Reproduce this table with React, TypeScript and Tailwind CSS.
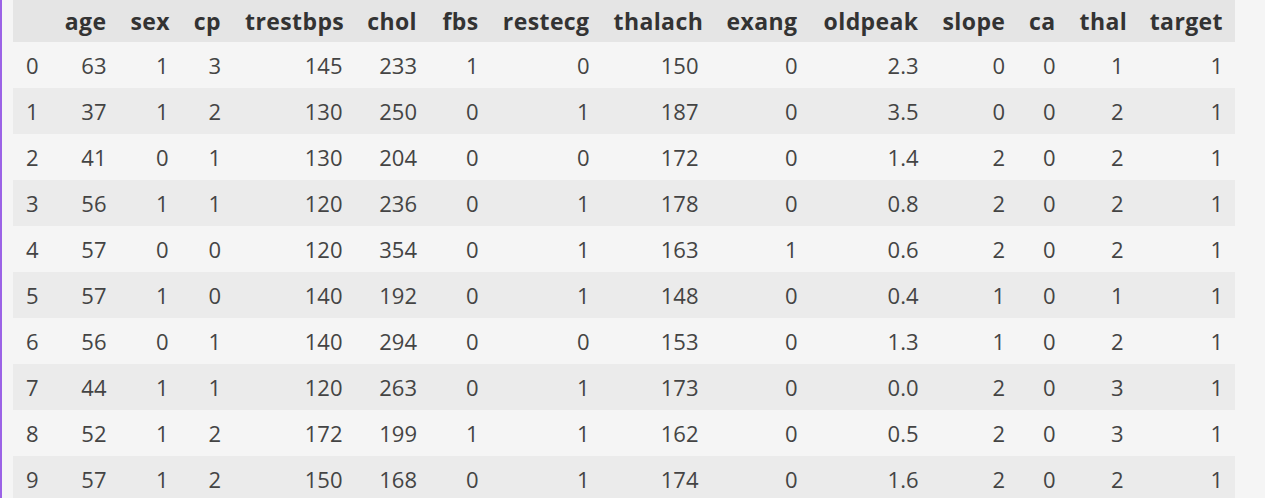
const columns = [
  { key: "", width: 37.5 },
  { key: "age", width: 68 },
  { key: "sex", width: 62 },
  { key: "cp", width: 52.5 },
  { key: "trestbps", width: 121.5 },
  { key: "chol", width: 74.5 },
  { key: "fbs", width: 61.5 },
  { key: "restecg", width: 111 },
  { key: "thalach", width: 109 },
  { key: "exang", width: 99 },
  { key: "oldpeak", width: 121 },
  { key: "slope", width: 86.5 },
  { key: "ca", width: 50.5 },
  { key: "thal", width: 68 },
  { key: "target", width: 99.5 },
];

const rows = [
  [63, 1, 3, 145, 233, 1, 0, 150, 0, "2.3", 0, 0, 1, 1],
  [37, 1, 2, 130, 250, 0, 1, 187, 0, "3.5", 0, 0, 2, 1],
  [41, 0, 1, 130, 204, 0, 0, 172, 0, "1.4", 2, 0, 2, 1],
  [56, 1, 1, 120, 236, 0, 1, 178, 0, "0.8", 2, 0, 2, 1],
  [57, 0, 0, 120, 354, 0, 1, 163, 1, "0.6", 2, 0, 2, 1],
  [57, 1, 0, 140, 192, 0, 1, 148, 0, "0.4", 1, 0, 1, 1],
  [56, 0, 1, 140, 294, 0, 0, 153, 0, "1.3", 1, 0, 2, 1],
  [44, 1, 1, 120, 263, 0, 1, 173, 0, "0.0", 2, 0, 3, 1],
  [52, 1, 2, 172, 199, 1, 1, 162, 0, "0.5", 2, 0, 3, 1],
  [57, 1, 2, 150, 168, 0, 1, 174, 0, "1.6", 2, 0, 2, 1],
];

export default function App() {
  return (
    <div className="h-[498px] overflow-hidden border-l-2 border-[#9b62e6] bg-[#f5f5f5] pl-[11px] font-['Open_Sans',sans-serif] text-[22px]">
      <table className="w-[1222px] table-fixed border-collapse">
        <colgroup>
          {columns.map((col, i) => (
            <col key={i} style={{ width: col.width }} />
          ))}
        </colgroup>
        <thead>
          <tr className="h-[42px] bg-[#e5e5e5]">
            {columns.map((col, i) => (
              <th
                key={i}
                className="px-[12px] text-right text-[23px] font-bold leading-none tracking-[0.4px] text-[#333]"
              >
                {col.key}
              </th>
            ))}
          </tr>
        </thead>
        <tbody>
          {rows.map((row, r) => (
            <tr
              key={r}
              className={`h-[46px] ${r % 2 === 0 ? "bg-[#f5f5f5]" : "bg-[#ebebeb]"}`}
            >
              <td className="px-[13px] text-left leading-none text-[#444]">{r}</td>
              {row.map((v, c) => (
                <td key={c} className="px-[12px] text-right leading-none text-[#444]">
                  {v}
                </td>
              ))}
            </tr>
          ))}
        </tbody>
      </table>
    </div>
  );
}
